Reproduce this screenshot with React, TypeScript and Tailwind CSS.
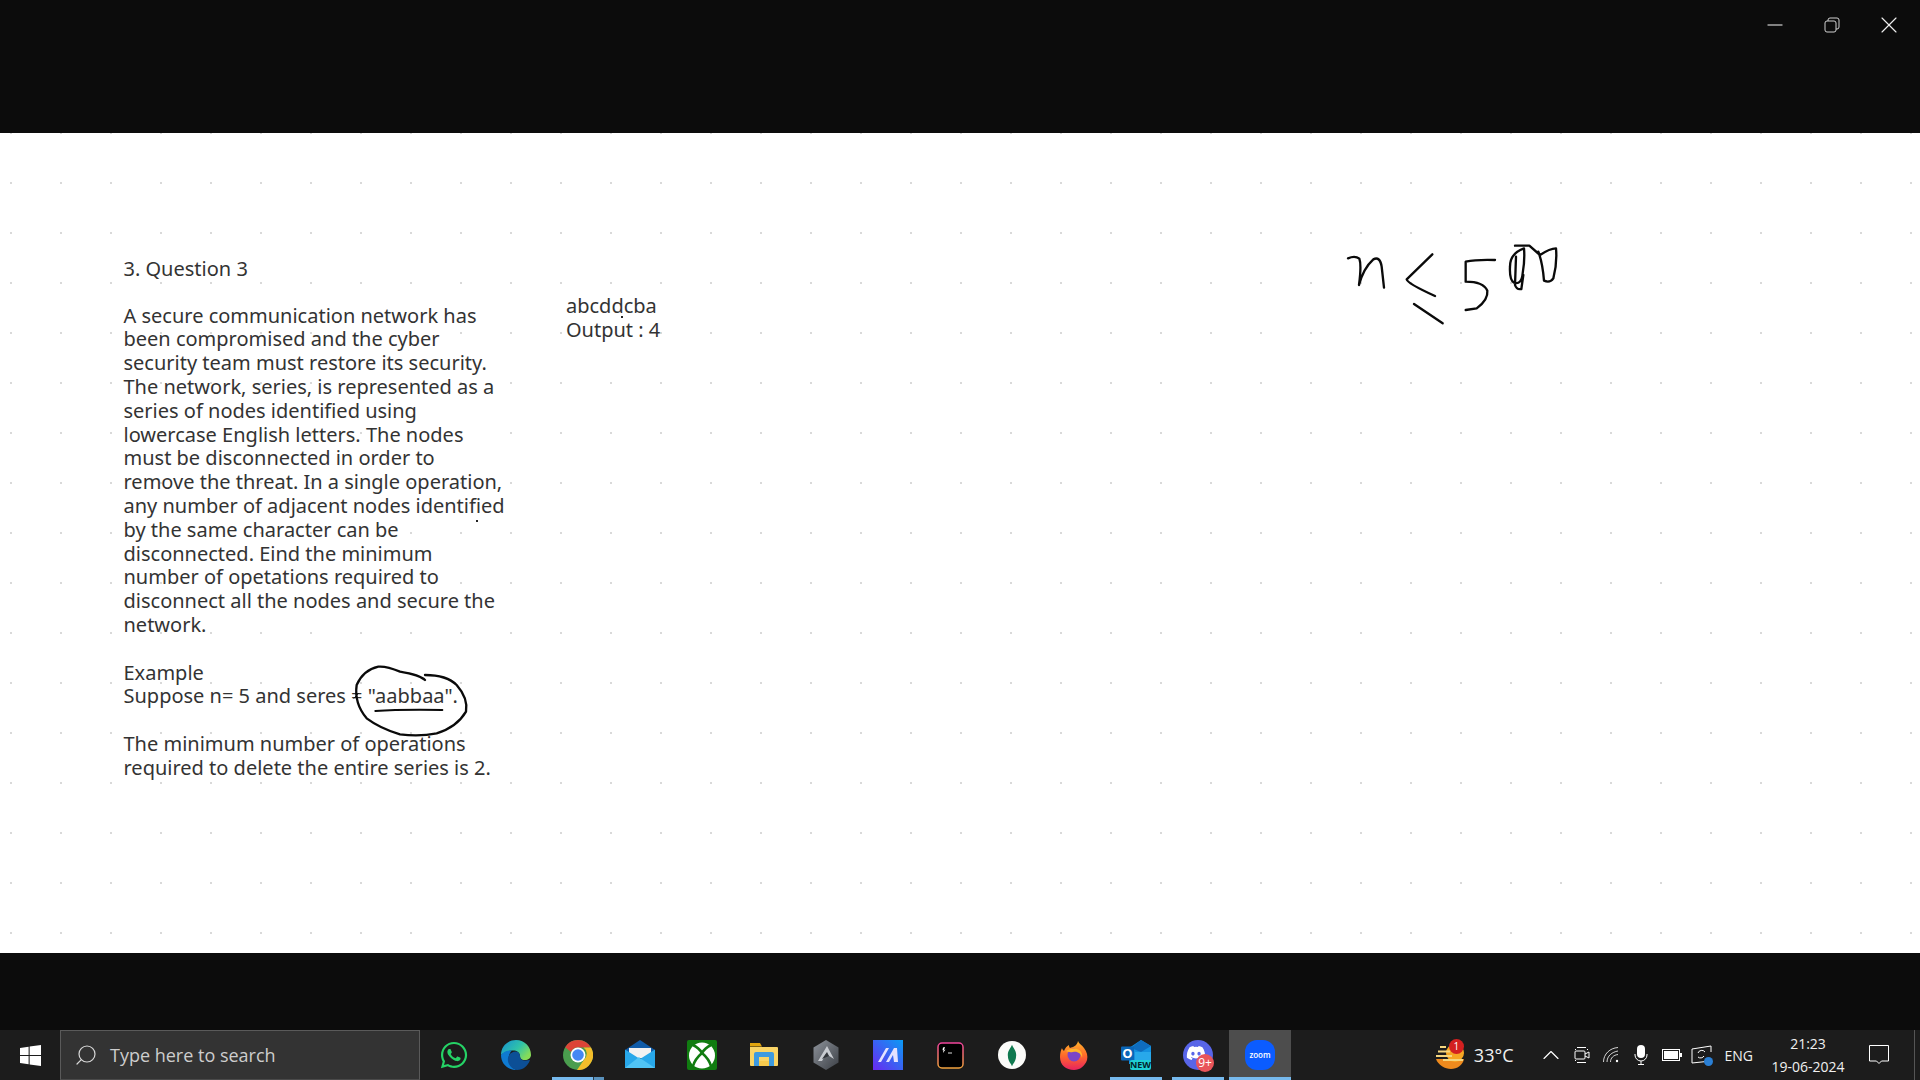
import { Search, Minus, X, ChevronUp } from "lucide-react"
import { FaWhatsapp, FaDiscord } from "react-icons/fa"

const problemLines = [
  "A secure communication network has",
  "been compromised and the cyber",
  "security team must restore its security.",
  "The network, series, is represented as a",
  "series of nodes identified using",
  "lowercase English letters. The nodes",
  "must be disconnected in order to",
  "remove the threat. In a single operation,",
  "any number of adjacent nodes identified",
  "by the same character can be",
  "disconnected. Eind the minimum",
  "number of opetations required to",
  "disconnect all the nodes and secure the",
  "network.",
]

function EdgeIcon() {
  return (
    <svg viewBox="0 0 30 30" className="w-[30px] h-[30px]">
      <defs>
        <linearGradient id="edgeTop" x1="0" y1="0" x2="1" y2="0.6">
          <stop offset="0" stopColor="#1590d4" />
          <stop offset="0.6" stopColor="#30c3a8" />
          <stop offset="1" stopColor="#86dc58" />
        </linearGradient>
      </defs>
      <path d="M0 15C0 6 7 0 15 0c9 0 15 7 15 15 0 3-3 5-6 5-4 0-5-2-5-4 0-4-4-6-8-5.500C6 11 2 13 0 15z" fill="url(#edgeTop)" />
      <path d="M0 15C3 11 7 10 11 10.500 7 14 6 22 11 27 13 29 15 30 16 30 7 30 0 24 0 15z" fill="#0f7ad1" />
      <path d="M11 12.500c3-2 8-1 8 3.500 0 3 2 5 6 4.500l4-.5c-2 6-7 10-13 10-6-1-10-7-9-12 .5-2 2-5 4-5.500z" fill="#0c4f96" />
    </svg>
  )
}

function ChromeIcon() {
  return (
    <svg viewBox="0 0 30 30" className="w-[30px] h-[30px]">
      <circle cx="15" cy="15" r="15" fill="#4a9d4e" />
      <path d="M15 0a15 15 0 0 1 13 7.500H15a7.500 7.500 0 0 0-7 4.500L2.200 7.200A15 15 0 0 1 15 0z" fill="#dc4437" />
      <path d="M28 7.500A15 15 0 0 1 14 30l7.500-11a7.500 7.500 0 0 0-1-11.500z" fill="#f2bd2a" />
      <circle cx="15" cy="15" r="7.500" fill="#fff" />
      <circle cx="15" cy="15" r="5.800" fill="#4587f3" />
    </svg>
  )
}

function MailIcon() {
  return (
    <svg viewBox="0 0 30 30" className="w-[30px] h-[30px]">
      <path d="M0 10 15 0l15 10v4H0z" fill="#0f5ba8" />
      <path d="M4 8h22v10H4z" fill="#f2f2f2" />
      <path d="M0 9.500 15 19 30 9.500V28H0z" fill="#28a8ea" />
      <path d="M0 28 14 17l1 1 15 10z" fill="#50c4f5" />
    </svg>
  )
}

function XboxIcon() {
  return (
    <svg viewBox="0 0 30 30" className="w-[30px] h-[30px]">
      <rect width="30" height="30" rx="2" fill="#107c10" />
      <circle cx="15" cy="15.500" r="13" fill="#fff" />
      <g fill="none" stroke="#107c10" strokeWidth="2.600">
        <path d="M6 5Q12 8 15 13 8 19 6 26" />
        <path d="M24 5Q18 8 15 13 22 19 24 26" />
      </g>
    </svg>
  )
}

function FolderIcon() {
  return (
    <svg viewBox="0 0 30 30" className="w-[30px] h-[30px]">
      <path d="M1 3h10l2 3.500H1z" fill="#e2a50e" />
      <path d="M1 7h27a1 1 0 0 1 1 1v17a1 1 0 0 1-1 1H2a1 1 0 0 1-1-1z" fill="#f9d466" />
      <path d="M5 26V14a2 2 0 0 1 2-2h16a2 2 0 0 1 2 2v12h-5v-9H10v9z" fill="#3d9ae0" />
      <path d="M10 21h10v5H10z" fill="#f5c94d" />
    </svg>
  )
}

function HexIcon() {
  return (
    <svg viewBox="0 0 30 30" className="w-[30px] h-[30px]">
      <defs>
        <linearGradient id="hexFill" x1="0" y1="0" x2="1" y2="1">
          <stop offset="0" stopColor="#8d929a" />
          <stop offset="1" stopColor="#3c4046" />
        </linearGradient>
      </defs>
      <path d="M15 0 27.500 7.500v15L15 30 2.500 22.500v-15z" fill="url(#hexFill)" />
      <path d="M7 21 16 6l7 13-8-5-4 7z" fill="#c9ccd1" />
      <path d="M11 19 16 12l2 4z" fill="#33363b" />
    </svg>
  )
}

function LinearIcon() {
  return (
    <svg viewBox="0 0 30 30" className="w-[30px] h-[30px]">
      <defs>
        <linearGradient id="linearBg" x1="1" y1="0" x2="0" y2="1">
          <stop offset="0" stopColor="#0a9bf5" />
          <stop offset="1" stopColor="#6a28f0" />
        </linearGradient>
      </defs>
      <rect width="30" height="30" fill="url(#linearBg)" />
      <path d="M5 22 13 8h3L8 22zM13 22l8-14h3l1 14h-4l-1-7-4 7z" fill="#e4e2ff" />
    </svg>
  )
}

function TerminalIcon() {
  return (
    <svg viewBox="0 0 27 27" className="w-[27px] h-[27px]">
      <defs>
        <linearGradient id="termBorder" x1="0" y1="0" x2="0" y2="1">
          <stop offset="0" stopColor="#f0439c" />
          <stop offset="1" stopColor="#f0a23c" />
        </linearGradient>
      </defs>
      <rect x="1" y="1" width="25" height="25" rx="4" fill="#000" stroke="url(#termBorder)" strokeWidth="1.500" />
      <path d="M6 5.500 8 5 7 8l1.500-.5L6 11l.5-3-1 .3z" fill="#fff" />
      <path d="M11 11h4" stroke="#ddd" strokeWidth="1" />
    </svg>
  )
}

function MongoIcon() {
  return (
    <svg viewBox="0 0 30 30" className="w-[28px] h-[28px]">
      <circle cx="15" cy="15" r="15" fill="#fbfbf9" />
      <path d="M15 4c1 3 4.500 6 4.500 11s-2 8-3.500 10L15 27l-1-2c-1.500-2-3.500-5-3.500-10S14 7 15 4z" fill="#10794f" />
    </svg>
  )
}

function FirefoxIcon() {
  return (
    <svg viewBox="0 0 30 30" className="w-[30px] h-[30px]">
      <defs>
        <linearGradient id="foxBody" x1="0" y1="0" x2="0" y2="1">
          <stop offset="0" stopColor="#ffb52b" />
          <stop offset="0.5" stopColor="#ff6a2a" />
          <stop offset="1" stopColor="#e8225f" />
        </linearGradient>
      </defs>
      <path d="M19 1c1 3 4 4 6 7 3 4 4 8 3 12-2 6-7 10-13 10C7 30 1 25 1 17c0-4 1-7 2-9 0 1 1 2 2 3 1-3 3-5 5-6 0 1 0 2 1 3 3-1 7-2 8-7z" fill="url(#foxBody)" />
      <circle cx="15" cy="15" r="6.500" fill="#7b45c8" />
      <path d="M7 11c3-2 8-3 11-2 4 1 6 5 5 9-1-5-5-7-9-6-3 .5-5 0-7-1z" fill="#ffb52b" />
    </svg>
  )
}

function OutlookIcon() {
  return (
    <div className="relative w-[30px] h-[30px]">
      <svg viewBox="0 0 30 30" className="absolute inset-0 w-[30px] h-[30px]">
        <path d="M8 8 20 0l10 6v18H8z" fill="#1490df" />
        <path d="M20 0l10 6-10 6-10-4z" fill="#0f6cbd" />
        <path d="M14 12h16v12H14z" fill="#28a8ea" />
        <rect x="0" y="6.500" width="13" height="14" rx="1" fill="#0a66b8" />
      </svg>
      <span className="absolute left-0 top-[5px] w-[13px] text-center text-[13px] leading-[16px] font-bold text-white font-['Open_Sans',sans-serif]">O</span>
      <span className="absolute left-[9px] top-[20px] w-[21px] h-[10px] bg-[#1fd0d4] rounded-[2px] text-center text-[9px] leading-[10px] font-bold text-[#03262b] font-['Open_Sans',sans-serif]">NEW</span>
    </div>
  )
}

function DiscordIcon() {
  return (
    <div className="relative w-[30px] h-[30px] rounded-full bg-[#5865e8] flex items-center justify-center">
      <FaDiscord className="text-white w-[20px] h-[20px] -translate-x-[2px] -translate-y-[2px]" />
      <span className="absolute left-[13px] top-[14px] w-[18px] h-[18px] rounded-full bg-[#e9555a] text-white text-center text-[12px] leading-[18px] font-['Open_Sans',sans-serif]">9+</span>
    </div>
  )
}

function ZoomIcon() {
  return (
    <div className="w-[30px] h-[30px] rounded-[12px] bg-[#0b5cff] flex items-center justify-center text-white text-[8px] font-semibold font-['Open_Sans',sans-serif]">
      zoom
    </div>
  )
}

const taskbarApps = [
  { name: "whatsapp", icon: <FaWhatsapp className="w-[30px] h-[30px] text-[#25d366]" /> },
  { name: "edge", icon: <EdgeIcon /> },
  { name: "chrome", icon: <ChromeIcon />, running: "chrome" },
  { name: "mail", icon: <MailIcon /> },
  { name: "xbox", icon: <XboxIcon /> },
  { name: "explorer", icon: <FolderIcon /> },
  { name: "hex", icon: <HexIcon /> },
  { name: "linear", icon: <LinearIcon /> },
  { name: "terminal", icon: <TerminalIcon /> },
  { name: "mongo", icon: <MongoIcon /> },
  { name: "firefox", icon: <FirefoxIcon /> },
  { name: "outlook", icon: <OutlookIcon />, running: "plain" },
  { name: "discord", icon: <DiscordIcon />, running: "plain" },
  { name: "zoom", icon: <ZoomIcon />, running: "active" },
]

function AppButton({ icon, running }: { icon: React.ReactNode; running?: string }) {
  return (
    <div className={`relative h-full w-[62px] flex items-center justify-center ${running === "active" ? "bg-[#4d4d4d]" : ""}`}>
      {icon}
      {running === "chrome" && (
        <div className="absolute bottom-0 left-[5px] right-[5px] h-[3px] bg-[#76b9ed] flex justify-end">
          <div className="w-[11px] h-full bg-[#5a92bd] border-l border-[#2a3a46]" />
        </div>
      )}
      {running === "plain" && <div className="absolute bottom-0 left-[5px] right-[5px] h-[3px] bg-[#76b9ed]" />}
      {running === "active" && <div className="absolute bottom-0 left-0 right-0 h-[3px] bg-[#76b9ed]" />}
    </div>
  )
}

function WeatherIcon() {
  return (
    <div className="relative w-[30px] h-[30px]">
      <svg viewBox="0 0 30 30" className="w-[30px] h-[30px]">
        <path d="M1 19h28c-1 6-7 10-13 10S3 25 1 19z" fill="#ee8a1d" />
        <circle cx="20" cy="13" r="9" fill="#f6a623" />
        <path d="M5 7h6M3 11.500h12M1 16h16M8 20h20" stroke="#f5d67e" strokeWidth="2" />
      </svg>
      <span className="absolute left-[14px] -top-[1px] w-[15px] h-[15px] rounded-full bg-[#d32020] text-white text-center text-[10px] leading-[15px] font-['Open_Sans',sans-serif]">1</span>
    </div>
  )
}

function TrayIcons() {
  return (
    <>
      <ChevronUp className="ml-[23px] w-[28px] h-[28px] text-white" strokeWidth={1} />
      <svg viewBox="0 0 16 20" className="ml-[9px] w-[16px] h-[20px]" fill="none" stroke="#fff" strokeWidth="1">
        <path d="M3 2.500h9M3 17.500h9M1.500 4v1M1.500 15v1M13.500 4v1" />
        <rect x="1" y="6" width="10" height="8" rx="1" />
        <path d="M11 9l4-2v6l-4-2" />
      </svg>
      <svg viewBox="0 0 16 16" className="ml-[13px] w-[16px] h-[16px]" fill="none" stroke="#fff" strokeWidth="1">
        <path d="M.5 15C.5 7 7 1 15 .5M4 15c0-6 5-10 11-11M7.500 15c0-4 3-7 7.500-7.500" opacity="0.8" />
        <circle cx="14" cy="14" r="1.200" fill="#fff" stroke="none" />
      </svg>
      <svg viewBox="0 0 14 20" className="ml-[15px] w-[14px] h-[20px]" fill="#fff">
        <rect x="3" y="0" width="8" height="13" rx="4" />
        <path d="M1 9v1a6 6 0 0 0 12 0V9M7 16v3M4 19.500h6" fill="none" stroke="#fff" strokeWidth="1" />
      </svg>
      <svg viewBox="0 0 20 12" className="ml-[14px] w-[20px] h-[12px]" fill="none">
        <rect x=".5" y=".5" width="17" height="11" stroke="#fff" />
        <rect x="2" y="2" width="14" height="8" fill="#fff" />
        <rect x="18" y="4" width="2" height="4" fill="#fff" />
      </svg>
      <div className="relative ml-[9px] w-[21px] h-[20px]">
        <svg viewBox="0 0 21 20" className="w-[21px] h-[20px]" fill="none" stroke="#fff" strokeWidth="1">
          <path d="M1 4l19-3v6M20 16 1 18V4" />
          <path d="M7 8a4 4 0 0 1 7-1M13 11a4 4 0 0 1-6 1" />
        </svg>
        <div className="absolute right-[-1px] bottom-[-1px] w-[9px] h-[9px] rounded-full bg-[#2a7fd4]" />
      </div>
    </>
  )
}

export default function App() {
  return (
    <div className="w-[1920px] h-[1080px] flex flex-col overflow-hidden bg-[#0c0c0c] font-['Noto_Sans',sans-serif]">
      {/* Window title bar */}
      <div className="h-[133px] shrink-0 flex justify-end items-start text-[#d8d8d8]">
        <div className="w-[57px] h-[50px] flex items-center justify-center">
          <Minus className="w-[24px] h-[24px] text-[#a8a8a8]" strokeWidth={1.4} />
        </div>
        <div className="w-[57px] h-[50px] flex items-center justify-center">
          <svg viewBox="0 0 16 16" className="w-[16px] h-[16px]" fill="none" stroke="#d0d0d0" strokeWidth="1">
            <rect x="1" y="4" width="11" height="11" rx="2" />
            <path d="M4 4V3a2 2 0 0 1 2-2h7a2 2 0 0 1 2 2v7a2 2 0 0 1-2 2h-1" />
          </svg>
        </div>
        <div className="w-[57px] h-[50px] flex items-center justify-center mr-[3px]">
          <X className="w-[28px] h-[28px] text-[#eeeeee]" strokeWidth={1} />
        </div>
      </div>

      {/* Whiteboard */}
      <div className="relative h-[820px] shrink-0 bg-white bg-[radial-gradient(circle_at_center,#d9d9d9_1px,transparent_1.5px)] bg-[size:50px_50px] bg-[position:-14px_-25px] pl-[123.5px] pt-[124px] flex text-[20px] leading-[23.8px] text-[#333333]">
        <div className="w-[442.5px]">
          <div>3. Question 3</div>
          <div className="mt-[22.8px]">
            {problemLines.map((line) => (
              <div key={line}>{line}</div>
            ))}
          </div>
          <div className="mt-[23.8px]">Example</div>
          <div>Suppose n= 5 and seres = "aabbaa".</div>
          <div className="mt-[23.8px]">The minimum number of operations</div>
          <div>required to delete the entire series is 2.</div>
        </div>
        <div className="mt-[37px]">
          <div>abcddcba</div>
          <div>Output : 4</div>
        </div>

        {/* Pen strokes over the board */}
        <svg viewBox="0 0 780 360" className="absolute left-[1320px] top-[87px] w-[260px] h-[120px]" fill="none" stroke="#0a0a0a" strokeWidth="7" strokeLinecap="round" strokeLinejoin="round">
          <path d="M84 115Q105 106 118 116 125 135 117 195 130 145 160 118 180 108 185 140L192 203" />
          <path d="M337 103 260 178Q262 190 345 228" />
          <path d="M282 252 368 310" />
          <path d="M525 120Q470 118 437 125L437 185Q490 185 502 212 505 240 470 265L437 270" />
          <path d="M585 77H628L660 105Q690 85 708 85 712 130 700 175 690 190 672 182 668 130 655 95" />
          <path d="M612 85Q570 100 570 140 568 180 582 188 605 195 608 160 615 120 612 85ZM588 110 585 195Q590 210 604 207L610 165" />
        </svg>
        <svg viewBox="0 0 1260 450" className="absolute left-[100px] top-[507px] w-[420px] h-[150px]" fill="none" stroke="#0a0a0a" strokeLinecap="round" strokeLinejoin="round">
          <path strokeWidth="7" d="M975 120Q960 105 900 95 860 78 835 80 790 90 770 135 762 190 800 235 840 265 900 283 960 290 1010 280 1070 262 1098 215 1105 175 1070 135 1040 105 975 105" />
          <path strokeWidth="6" d="M826 213Q900 208 1027 210" />
          <path strokeWidth="3" d="M762 175 775 160" />
        </svg>
        <div className="absolute left-[476px] top-[387px] w-[2px] h-[2px] bg-[#222]" />
        <div className="absolute left-[621px] top-[183px] w-[2px] h-[2px] bg-[#222]" />
      </div>

      <div className="h-[77px] shrink-0" />

      {/* Taskbar */}
      <div className="h-[50px] shrink-0 flex items-center bg-[#1c1c1c] text-white font-['Open_Sans',sans-serif]">
        <div className="w-[60px] h-full flex items-center justify-center">
          <svg viewBox="0 0 20 20" className="w-[21px] h-[21px]" fill="#fff">
            <path d="M0 2.800 8.200 1.700V9.500H0zM9.200 1.500 20 0V9.500H9.200zM0 10.500H8.200V18.300L0 17.200zM9.200 10.500H20V20L9.200 18.500z" />
          </svg>
        </div>
        <div className="w-[360px] h-full bg-[#333333] border border-[#5a5a5a] border-b-[#4a4a4a] flex items-center pl-[13px]">
          <Search className="w-[24px] h-[24px] text-[#d8d8d8] -scale-x-100" strokeWidth={1.2} />
          <span className="ml-[12px] text-[18px] text-[#cdcdcd]">Type here to search</span>
        </div>
        <div className="ml-[3px] h-full flex">
          {taskbarApps.map((app) => (
            <AppButton key={app.name} icon={app.icon} running={app.running} />
          ))}
        </div>

        <div className="ml-auto h-full flex items-center pr-[5px]">
          <WeatherIcon />
          <span className="ml-[9px] text-[18px] text-[#f0f0f0]">33°C</span>
          <TrayIcons />
          <span className="ml-[13px] text-[14px] text-[#f0f0f0]">ENG</span>
          <div className="ml-[17px] w-[76px] text-center text-[14px] leading-[23px] text-[#f0f0f0]">
            <div>21:23</div>
            <div>19-06-2024</div>
          </div>
          <svg viewBox="0 0 20 20" className="ml-[23px] mr-[25px] w-[20px] h-[20px]" fill="none" stroke="#fff" strokeWidth="1">
            <path d="M.5.500h19v15.500h-7l-2.500 2.500-2.500-2.500h-7z" />
          </svg>
          <div className="w-px h-full bg-[#555]" />
        </div>
      </div>
    </div>
  )
}
